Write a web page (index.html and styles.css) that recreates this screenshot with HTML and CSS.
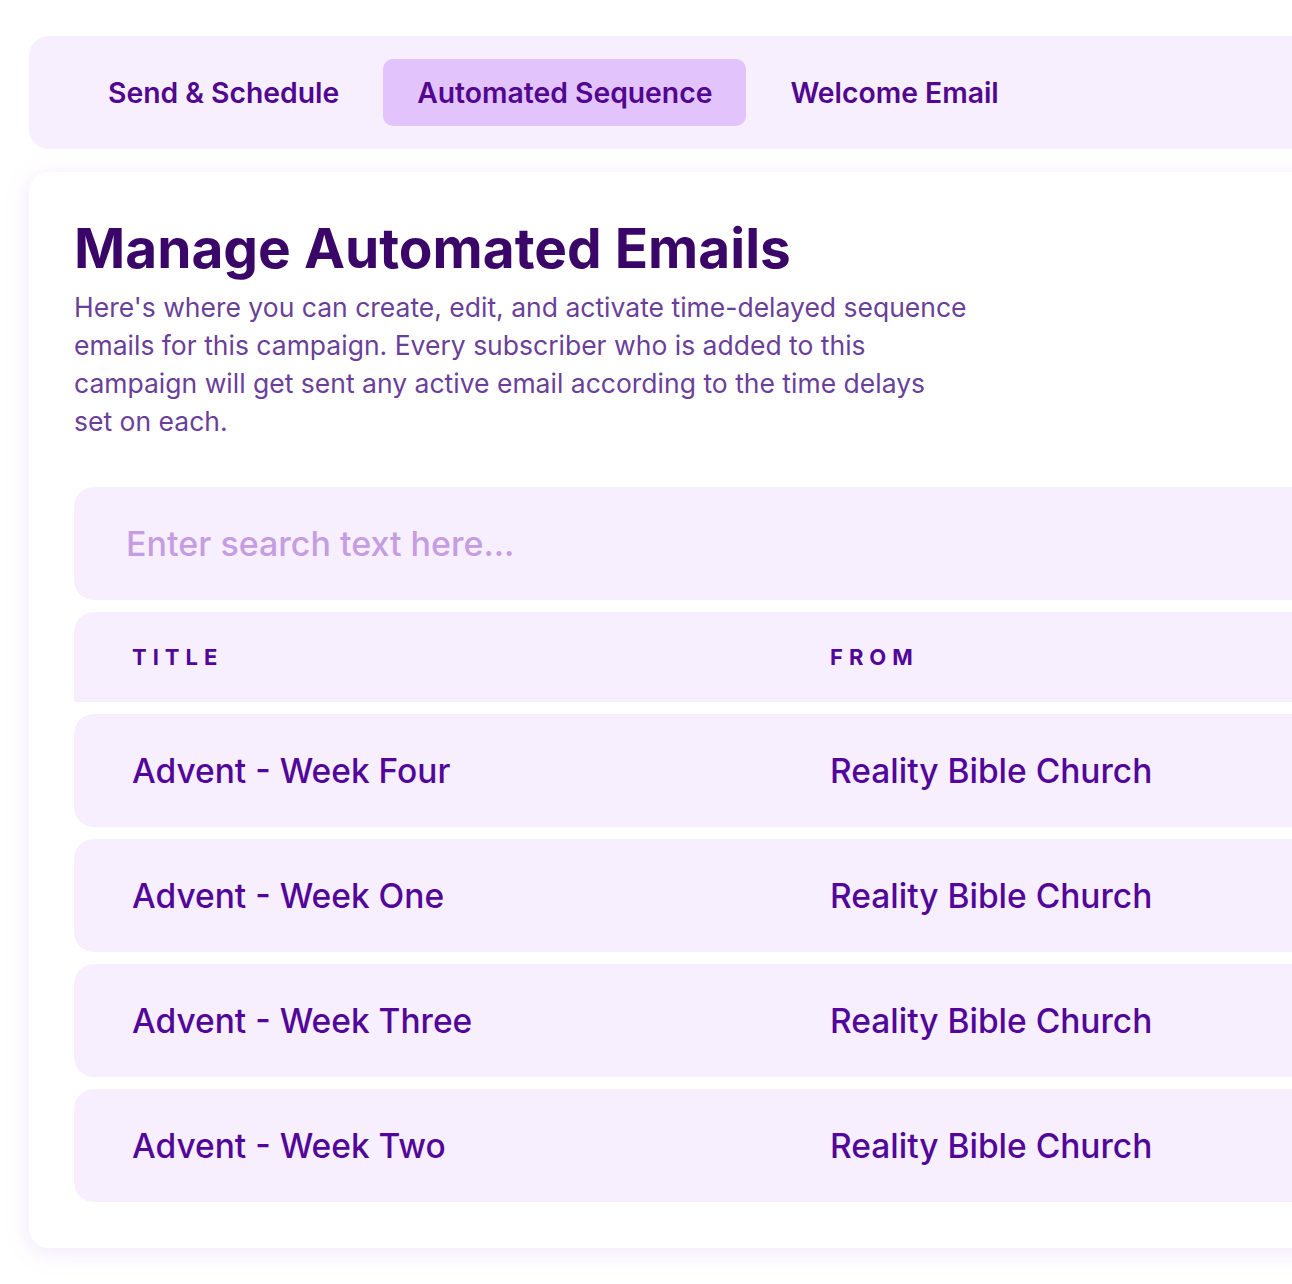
FILE: index.html
```html
<!DOCTYPE html>
<html lang="en">
<head>
  <meta charset="UTF-8" />
  <meta name="viewport" content="width=device-width, initial-scale=1.0"/>
  <title>Manage Automated Emails</title>
  <link rel="stylesheet" href="styles.css">
</head>
<body>
  <div class="page">

    <div class="tab-bar">
      <a href="#" class="tab">Send &amp; Schedule</a>
      <a href="#" class="tab active">Automated Sequence</a>
      <a href="#" class="tab">Welcome Email</a>
    </div>

    <div class="card">
      <h1 class="card-title">Manage Automated Emails</h1>
      <p class="card-desc">Here's where you can create, edit, and activate time-delayed sequence emails for this campaign. Every subscriber who is added to this campaign will get sent any active email according to the time delays set on each.</p>

      <input class="search" type="text" placeholder="Enter search text here..." />

      <div class="table">
        <div class="row head">
          <div class="col-title">TITLE</div>
          <div class="col-from">FROM</div>
        </div>
        <div class="row">
          <div class="col-title">Advent - Week Four</div>
          <div class="col-from">Reality Bible Church</div>
        </div>
        <div class="row">
          <div class="col-title">Advent - Week One</div>
          <div class="col-from">Reality Bible Church</div>
        </div>
        <div class="row">
          <div class="col-title">Advent - Week Three</div>
          <div class="col-from">Reality Bible Church</div>
        </div>
        <div class="row">
          <div class="col-title">Advent - Week Two</div>
          <div class="col-from">Reality Bible Church</div>
        </div>
      </div>
    </div>

  </div>
</body>
</html>
```

FILE: styles.css
```css
body {
  margin: 0;
  font-family: Inter, Lato, sans-serif;
  background-color: white;
  overflow: hidden;
}

.page {
  width: 1420px;
  padding: 36px 0 40px 29px;
  display: flex;
  flex-direction: column;
  gap: 23px;
}

.tab-bar {
  background-color: #f7effd;
  border-radius: 20px;
  display: flex;
  gap: 10px;
  padding: 23px 0 23px 45px;
}

.tab {
  display: flex;
  align-items: center;
  height: 67px;
  padding: 0 34px;
  border-radius: 10px;
  color: #51078f;
  font-weight: 600;
  font-size: 28.3px;
  text-decoration: none;
}

.tab.active {
  background-color: #e2c3fc;
}

.card {
  background-color: white;
  border-radius: 20px;
  box-shadow: 0 4px 24px rgba(170, 120, 230, 0.18);
  padding: 40px 0 46px 45px;
}

.card-title {
  margin: 0;
  color: #3a0668;
  font-size: 55px;
  font-weight: 700;
  line-height: 72px;
}

.card-desc {
  margin: 4px 0 0;
  width: 893px;
  color: #6b3f99;
  font-size: 26.5px;
  line-height: 38px;
}

.search {
  display: block;
  margin-top: 47px;
  width: 100%;
  box-sizing: border-box;
  height: 113px;
  border: none;
  border-radius: 20px;
  background-color: #f7effd;
  padding: 0 52px;
  font-family: inherit;
  font-size: 34px;
  font-weight: 500;
  color: #51078f;
  outline: none;
}

.search::placeholder {
  color: #c49de2;
}

.table {
  margin-top: 12px;
  display: flex;
  flex-direction: column;
  gap: 12px;
}

.row {
  display: flex;
  align-items: center;
  height: 113px;
  padding-left: 58px;
  background-color: #f7effd;
  border-radius: 20px;
  color: #52079a;
  font-size: 33.5px;
  font-weight: 500;
}

.row.head {
  height: 90px;
  border-radius: 20px 20px 0 0;
  font-size: 22px;
  font-weight: 700;
  letter-spacing: 6px;
}

.col-title {
  width: 698px;
}
```
